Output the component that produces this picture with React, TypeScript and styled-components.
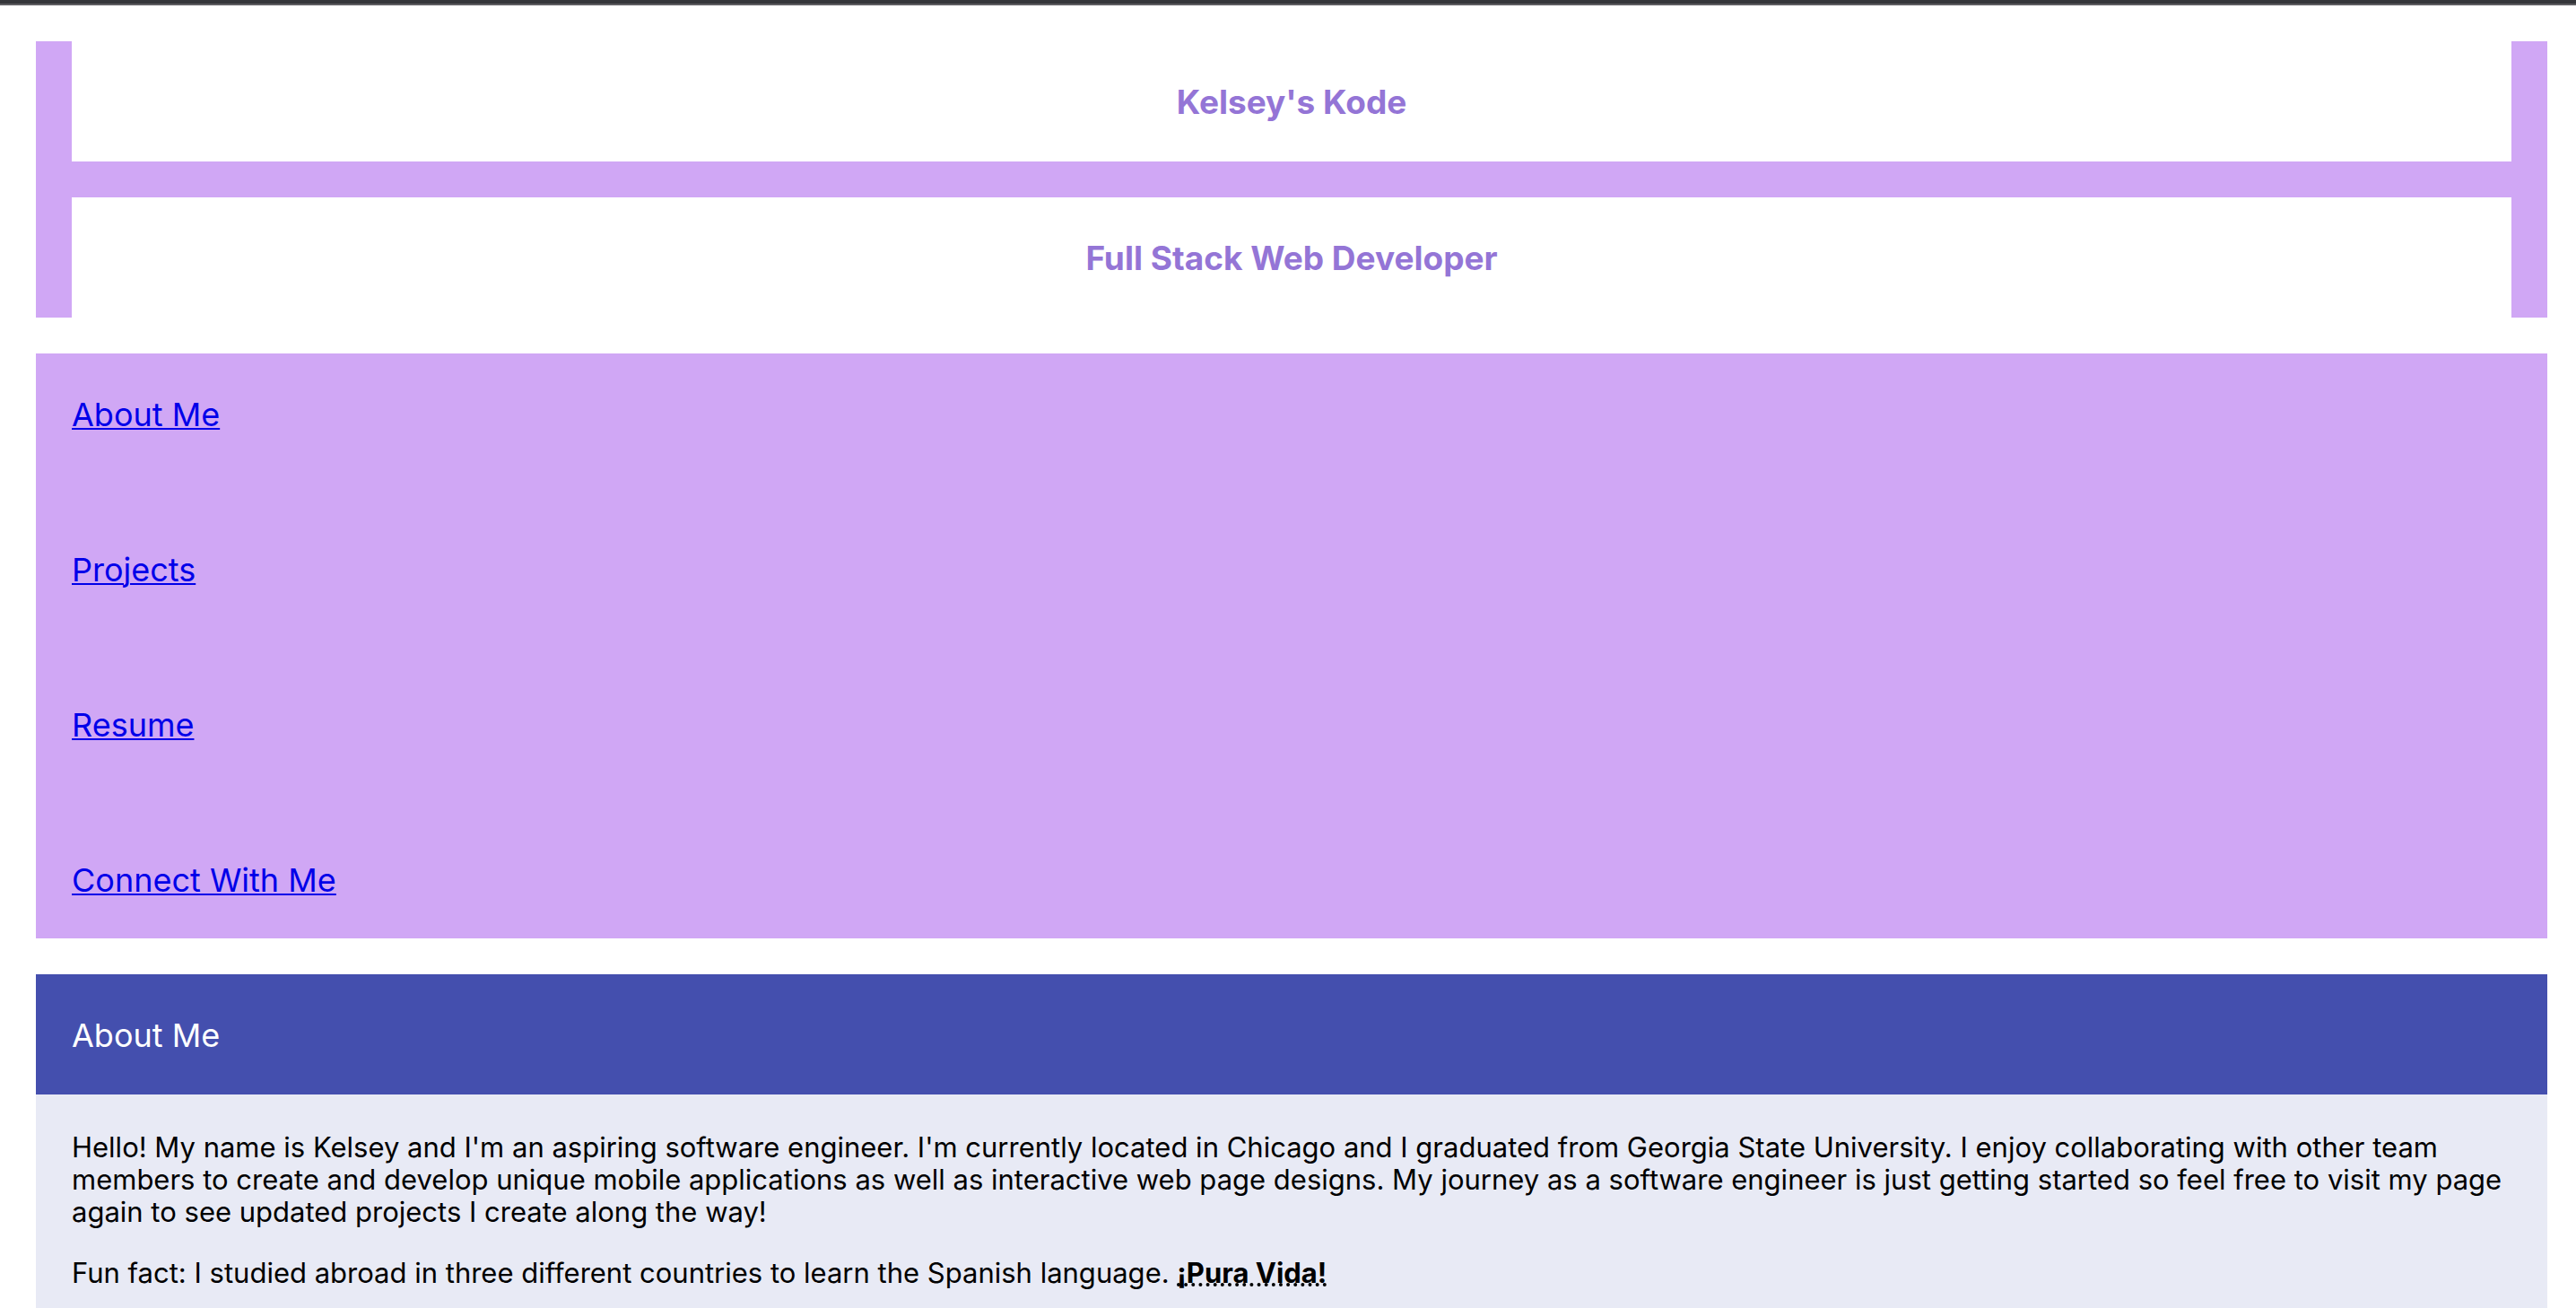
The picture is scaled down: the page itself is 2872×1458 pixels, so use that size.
import React from "react";
import styled, { createGlobalStyle } from "styled-components";

const GlobalStyle = createGlobalStyle`
  * {
    box-sizing: border-box;
  }

  body {
    margin: 0;
    background: #ffffff;
    color: #000000;
    font-family: Inter, "Liberation Sans", sans-serif;
    font-size: 31px;
    line-height: 36px;
  }
`;

const TopEdge = styled.div`
  height: 6px;
  background: #35363a;
  border-bottom: 2px solid #5e5d61;
`;

const Page = styled.div`
  display: flex;
  flex-direction: column;
  gap: 40px;
  padding: 40px 32px 40px 40px;
`;

const Banner = styled.header`
  display: flex;
  flex-direction: column;
  gap: 40px;
  padding: 0 40px;
  background: #d0a7f5;
`;

const BannerTitle = styled.h1`
  margin: 0;
  padding: 41px 40px 39px;
  background: #ffffff;
  color: #9475d6;
  font-size: 37px;
  font-weight: 700;
  line-height: 54px;
  text-align: center;
`;

const Nav = styled.nav`
  padding: 41px 40px 38px;
  background: #d0a7f5;
`;

const NavList = styled.ul`
  display: flex;
  flex-direction: column;
  gap: 119px;
  margin: 0;
  padding: 0;
  list-style: none;
`;

const NavItem = styled.li`
  font-size: 36px;
  line-height: 54px;
`;

const NavLink = styled.a`
  color: #0000e9;
  text-decoration-thickness: 2px;
  text-underline-offset: 2px;
`;

const Section = styled.section`
  background: #e8eaf5;
`;

const SectionTitle = styled.h2`
  margin: 0;
  padding: 41px 40px 39px;
  background: #444fae;
  color: #ffffff;
  font-size: 36px;
  font-weight: 400;
  line-height: 54px;
`;

const SectionBody = styled.div`
  display: flex;
  flex-direction: column;
  gap: 32px;
  padding: 41px 40px 39px;
`;

const Paragraph = styled.p`
  margin: 0;
`;

const Phrase = styled.abbr`
  font-weight: 700;
  text-decoration: underline dotted 4px;
  text-decoration-skip-ink: none;
  text-underline-offset: 0;
`;

const links = [
  { label: "About Me", href: "#about" },
  { label: "Projects", href: "#projects" },
  { label: "Resume", href: "#resume" },
  { label: "Connect With Me", href: "#connect" },
];

export default function App() {
  return (
    <>
      <GlobalStyle />
      <TopEdge />
      <Page>
        <Banner>
          <BannerTitle>Kelsey's Kode</BannerTitle>
          <BannerTitle as="h2">Full Stack Web Developer</BannerTitle>
        </Banner>
        <Nav>
          <NavList>
            {links.map((link) => (
              <NavItem key={link.href}>
                <NavLink href={link.href}>{link.label}</NavLink>
              </NavItem>
            ))}
          </NavList>
        </Nav>
        <Section id="about">
          <SectionTitle>About Me</SectionTitle>
          <SectionBody>
            <Paragraph>
              Hello! My name is Kelsey and I'm an aspiring software engineer. I'm currently located in
              Chicago and I graduated from Georgia State University. I enjoy collaborating with other
              team members to create and develop unique mobile applications as well as interactive web
              page designs. My journey as a software engineer is just getting started so feel free to
              visit my page again to see updated projects I create along the way!
            </Paragraph>
            <Paragraph>
              Fun fact: I studied abroad in three different countries to learn the Spanish language.{" "}
              <Phrase>¡Pura Vida!</Phrase>
            </Paragraph>
          </SectionBody>
        </Section>
      </Page>
    </>
  );
}
